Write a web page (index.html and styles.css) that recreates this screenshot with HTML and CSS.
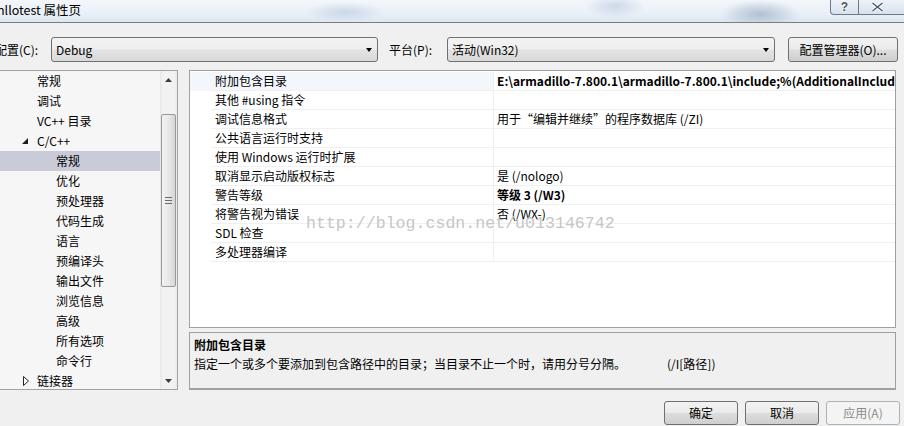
FILE: index.html
```html
<!DOCTYPE html>
<html>
<head>
	<meta charset="utf-8" />
	<link rel="stylesheet" href="styles.css">
</head>
<body>
<div id="window">

<div id="titlebar">
	<span id="title">hllotest 属性页</span>
	<div id="caption_buttons">
		<span class="cap_btn" id="cap_help">?</span>
		<span class="cap_btn" id="cap_close">
			<svg width="13" height="10" viewBox="0 0 13 10"><path d="M1.5 1 L11.5 9 M11.5 1 L1.5 9" stroke="#fff" stroke-width="3.2"/><path d="M1.5 1 L11.5 9 M11.5 1 L1.5 9" stroke="#4a5564" stroke-width="1.4"/></svg>
		</span>
	</div>
</div>

<div id="configbar">
	<span class="cfg_label" id="label_config">配置(C):</span>
	<div class="combo" id="combo_config"><span>Debug</span><i class="combo_arrow"></i></div>
	<span class="cfg_label" id="label_platform">平台(P):</span>
	<div class="combo" id="combo_platform"><span>活动(Win32)</span><i class="combo_arrow"></i></div>
	<button type="button" class="win_btn" id="config_manager">配置管理器(O)...</button>
</div>

<div id="mainarea">
	<div id="tree">
		<ul id="tree_list">
			<li class="lvl1">常规</li>
			<li class="lvl1">调试</li>
			<li class="lvl1">VC++ 目录</li>
			<li class="lvl1"><svg class="tw" width="6" height="6" viewBox="0 0 6 6"><path d="M6 0 L6 6 L0 6 Z" fill="#1e1e1e"/></svg>C/C++</li>
			<li class="lvl2 selected">常规</li>
			<li class="lvl2">优化</li>
			<li class="lvl2">预处理器</li>
			<li class="lvl2">代码生成</li>
			<li class="lvl2">语言</li>
			<li class="lvl2">预编译头</li>
			<li class="lvl2">输出文件</li>
			<li class="lvl2">浏览信息</li>
			<li class="lvl2">高级</li>
			<li class="lvl2">所有选项</li>
			<li class="lvl2">命令行</li>
			<li class="lvl1"><svg class="tw tw_closed" width="6" height="10" viewBox="0 0 6 10"><path d="M0.5 0.5 L5.5 5 L0.5 9.5 Z" fill="#fff" stroke="#262626"/></svg>链接器</li>
		</ul>
		<div id="tree_scroll">
			<div class="scroll_btn"><svg width="7" height="4" viewBox="0 0 7 4"><path d="M3.5 0 L7 4 L0 4 Z" fill="#3c3c3c"/></svg></div>
			<div class="scroll_track">
				<div class="scroll_thumb">
					<svg width="7" height="7" viewBox="0 0 7 7"><path d="M0 0.5 H7 M0 3.5 H7 M0 6.5 H7" stroke="#6b6b6b"/></svg>
				</div>
			</div>
			<div class="scroll_btn"><svg width="7" height="4" viewBox="0 0 7 4"><path d="M0 0 L7 0 L3.5 4 Z" fill="#3c3c3c"/></svg></div>
		</div>
	</div>

	<div id="rightcol">
		<div id="propgrid">
			<div class="prop_row selected"><div class="prop_margin"></div><div class="prop_name">附加包含目录</div><div class="prop_value bold">E:\armadillo-7.800.1\armadillo-7.800.1\include;%(AdditionalIncludeDirectories)</div></div>
			<div class="prop_row"><div class="prop_margin"></div><div class="prop_name">其他 #using 指令</div><div class="prop_value"></div></div>
			<div class="prop_row"><div class="prop_margin"></div><div class="prop_name">调试信息格式</div><div class="prop_value">用于“编辑并继续”的程序数据库 (/ZI)</div></div>
			<div class="prop_row"><div class="prop_margin"></div><div class="prop_name">公共语言运行时支持</div><div class="prop_value"></div></div>
			<div class="prop_row"><div class="prop_margin"></div><div class="prop_name">使用 Windows 运行时扩展</div><div class="prop_value"></div></div>
			<div class="prop_row"><div class="prop_margin"></div><div class="prop_name">取消显示启动版权标志</div><div class="prop_value">是 (/nologo)</div></div>
			<div class="prop_row"><div class="prop_margin"></div><div class="prop_name">警告等级</div><div class="prop_value bold">等级 3 (/W3)</div></div>
			<div class="prop_row"><div class="prop_margin"></div><div class="prop_name">将警告视为错误</div><div class="prop_value">否 (/WX-)</div></div>
			<div class="prop_row"><div class="prop_margin"></div><div class="prop_name">SDL 检查</div><div class="prop_value"></div></div>
			<div class="prop_row"><div class="prop_margin"></div><div class="prop_name">多处理器编译</div><div class="prop_value"></div></div>
		</div>
		<div id="description">
			<div id="desc_title">附加包含目录</div>
			<div id="desc_text"><span>指定一个或多个要添加到包含路径中的目录；当目录不止一个时，请用分号分隔。</span><span id="desc_switch">(/I[路径])</span></div>
		</div>
	</div>
</div>

<div id="footer">
	<button type="button" class="win_btn footer_btn">确定</button>
	<button type="button" class="win_btn footer_btn">取消</button>
	<button type="button" class="win_btn footer_btn" disabled>应用(A)</button>
</div>

<div id="watermark">http://blog.csdn.net/u013146742</div>

</div>
</body>
</html>
```

FILE: styles.css
```css
html, body {
	margin: 0;
	padding: 0;
}

body {
	width: 904px;
	height: 426px;
	overflow: hidden;
	background-color: #f0f0f0;
	font-family: "Noto Sans CJK SC", "Noto Sans", sans-serif;
	font-size: 12px;
	color: #000;
}

#window {
	position: relative;
	width: 904px;
	height: 426px;
	overflow: hidden;
}

/* title bar (aero glass, blurred) */
#titlebar {
	height: 22px;
	border-bottom: 1px solid #7a7f86;
	display: flex;
	align-items: flex-start;
	background:
		radial-gradient(ellipse 40px 10px at 345px 12px, rgba(175,195,220,0.55), rgba(175,195,220,0)),
		radial-gradient(ellipse 30px 12px at 615px 6px, rgba(170,190,215,0.5), rgba(170,190,215,0)),
		radial-gradient(ellipse 40px 14px at 760px 14px, rgba(140,160,185,0.6), rgba(140,160,185,0)),
		linear-gradient(to bottom, #f3f7fb 0%, #e9f0f7 60%, #dde7f1 100%);
}

#title {
	margin-left: -3px;
	line-height: 20px;
	font-size: 12.5px;
	color: #000;
	white-space: nowrap;
}

#caption_buttons {
	margin-left: auto;
	margin-right: -6px;
	height: 14px;
	display: flex;
	border: 1px solid #6c7989;
	border-top: none;
	border-radius: 0 0 4px 4px;
	background: linear-gradient(to bottom, rgba(235,240,246,0.6), rgba(205,215,228,0.6));
}

.cap_btn {
	width: 27px;
	height: 14px;
	display: flex;
	align-items: center;
	justify-content: center;
	font-family: "Liberation Sans", sans-serif;
	font-weight: bold;
	font-size: 12px;
	line-height: 14px;
	color: #4a5564;
	text-shadow: 0 0 2px #fff, 0 0 2px #fff;
}

#cap_help {
	border-right: 1px solid #6c7989;
}

#cap_close {
	width: 50px;
	justify-content: flex-start;
	padding-left: 12px;
	box-sizing: border-box;
}

/* configuration / platform row */
#configbar {
	display: flex;
	align-items: center;
	margin-top: 14px;
	height: 25px;
}

.cfg_label {
	white-space: nowrap;
	line-height: 25px;
}

#label_config {
	margin-left: -5px;
	width: 56px;
}

#label_platform {
	margin-left: 11px;
	width: 58px;
}

.combo {
	height: 25px;
	box-sizing: border-box;
	border: 1px solid #707070;
	border-radius: 3px;
	background: linear-gradient(to bottom, #f3f3f3 0%, #eeeeee 48%, #e3e3e3 52%, #d9d9d9 100%);
	display: flex;
	align-items: center;
	padding: 0 4px 0 4px;
}

#combo_config {
	width: 327px;
}

#combo_platform {
	width: 328px;
}

.combo span {
	flex: 1;
	line-height: 23px;
}

.combo_arrow {
	width: 0;
	height: 0;
	border-left: 3.5px solid transparent;
	border-right: 3.5px solid transparent;
	border-top: 4px solid #000;
	margin-right: 1px;
}

.win_btn {
	height: 25px;
	box-sizing: border-box;
	border: 1px solid #707070;
	border-radius: 3px;
	background: linear-gradient(to bottom, #f2f2f2 0%, #ebebeb 48%, #dddddd 52%, #cfcfcf 100%);
	font-family: "Noto Sans CJK SC", "Noto Sans", sans-serif;
	font-size: 12px;
	color: #000;
	padding: 0;
	line-height: 22px;
}

#config_manager {
	margin-left: 13px;
	width: 110px;
}

/* tree + grid */
#mainarea {
	display: flex;
	margin-top: 8px;
	height: 320px;
}

#tree {
	width: 178px;
	height: 320px;
	box-sizing: border-box;
	border: 1px solid #a3a3a3;
	border-left: none;
	background-color: #f6f6f6;
	display: flex;
	overflow: hidden;
}

#tree_list {
	list-style: none;
	margin: 0;
	padding: 0;
	width: 160px;
}

#tree_list li {
	height: 20px;
	line-height: 20px;
	white-space: nowrap;
	position: relative;
}

.lvl1 {
	padding-left: 37px;
}

.lvl2 {
	padding-left: 56px;
}

#tree_list li.selected {
	background-color: #c9ccd8;
}

.tw {
	position: absolute;
	left: 22px;
	top: 7px;
}

.tw_closed {
	left: 23px;
	top: 5px;
}

#tree_scroll {
	width: 17px;
	display: flex;
	flex-direction: column;
	background: linear-gradient(to right, #e6e6e6 0%, #f2f2f2 15%, #f2f2f2 85%, #e9e9e9 100%);
}

.scroll_btn {
	height: 17px;
	display: flex;
	align-items: center;
	justify-content: center;
}

.scroll_track {
	flex: 1;
}

.scroll_thumb {
	margin-top: 26px;
	margin-left: 1px;
	width: 15px;
	height: 173px;
	box-sizing: border-box;
	border: 1px solid #999;
	border-radius: 2px;
	background: linear-gradient(to right, #f3f3f3 0%, #e8e8e8 50%, #d6d6d6 100%);
	display: flex;
	align-items: center;
	justify-content: center;
}

#rightcol {
	margin-left: 11px;
	width: 707px;
	display: flex;
	flex-direction: column;
}

#propgrid {
	height: 258px;
	box-sizing: border-box;
	border: 1px solid #a0a0a0;
	padding-top: 1px;
	background-color: #fff;
	overflow: hidden;
}

.prop_row {
	display: flex;
	height: 19px;
	white-space: nowrap;
}

.prop_margin {
	width: 21px;
	flex: none;
}

.prop_name {
	width: 282px;
	flex: none;
	box-sizing: border-box;
	padding-left: 4px;
	line-height: 18px;
	border-bottom: 1px solid #f0f0f0;
}

.prop_value {
	flex: 1;
	overflow: hidden;
	box-sizing: border-box;
	padding-left: 3px;
	line-height: 18px;
	border-left: 1px solid #f0f0f0;
	border-bottom: 1px solid #f0f0f0;
}

.prop_row.selected .prop_margin,
.prop_row.selected .prop_name {
	background-color: #f3f7fc;
}

.bold {
	font-weight: bold;
}

#description {
	margin-top: 4px;
	height: 58px;
	box-sizing: border-box;
	border: 1px solid #a0a0a0;
	border-bottom: 2px solid #a0a0a0;
	padding: 2px 4px;
	background-color: #f0f0f0;
}

#desc_title {
	font-weight: bold;
	line-height: 19px;
}

#desc_text {
	line-height: 19px;
	white-space: nowrap;
}

#desc_switch {
	margin-left: 41px;
}

/* bottom buttons */
#footer {
	display: flex;
	justify-content: flex-end;
	gap: 7px;
	margin-top: 11px;
	padding-right: 4px;
}

.footer_btn {
	width: 74px;
	height: 24px;
}

.footer_btn:disabled {
	border-color: #adb2b5;
	background: #f4f4f4;
	color: #8a8a8a;
}

#watermark {
	position: absolute;
	left: 306px;
	top: 213px;
	font-family: "Liberation Mono", monospace;
	font-size: 16.6px;
	line-height: 22px;
	color: #c6c6c6;
	white-space: nowrap;
	pointer-events: none;
}
```
